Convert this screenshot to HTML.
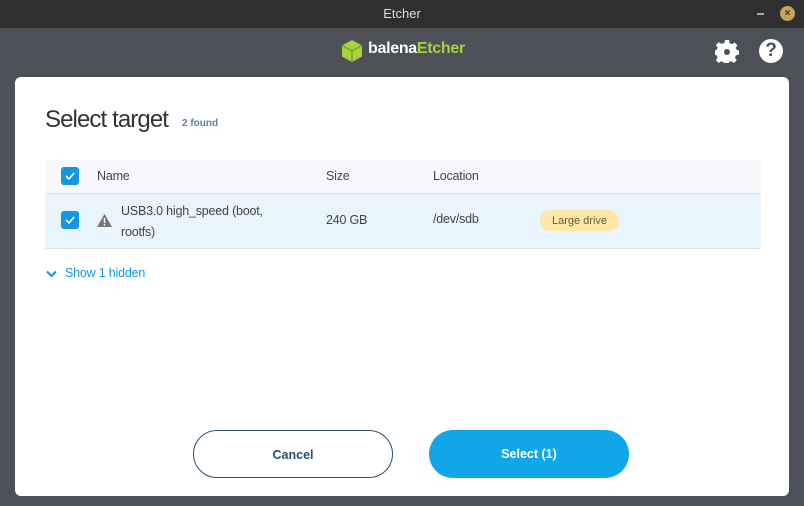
<!DOCTYPE html>
<html><head><style>
*{margin:0;padding:0;box-sizing:border-box}
body{width:804px;height:506px;background:#4d5057;font-family:"Liberation Sans",sans-serif;position:relative;overflow:hidden}
.tb{position:absolute;left:0;top:0;width:804px;height:28px;background:#2f2f2f;color:#ddd;font-size:13px;text-align:center;line-height:28px}
.card{position:absolute;left:15px;top:77px;width:774px;height:419px;background:#fff;border-radius:6px}
.abs{position:absolute}
.cb{position:absolute;width:18px;height:18px;background:#1496e2;border-radius:3px}
.cb svg{position:absolute;left:3px;top:3px}
.btn{position:absolute;top:430px;width:200px;height:48px;border-radius:24px;font-size:12.5px;font-weight:bold;text-align:center;line-height:48px}
.t{font-size:12.5px;color:#444;letter-spacing:-0.2px}
</style></head><body>
<div class="tb">Etcher</div>
<div class="abs" style="left:757px;top:13px;width:7px;height:2px;background:#aaa"></div>
<div class="abs" style="left:780px;top:6px;width:15px;height:15px;border-radius:50%;background:#c9a060;color:#333;font-size:10px;line-height:15px;text-align:center;font-weight:bold">×</div>
<svg class="abs" style="left:341px;top:39px" width="22" height="24" viewBox="0 0 22 24"><path d="M11 1L21 6.5V17.5L11 23L1 17.5V6.5Z" fill="#a5d33b"/><path d="M11 12L21 6.5M11 12L1 6.5M11 12V23" stroke="#6f9a20" stroke-width="1.2" fill="none"/></svg>
<div class="abs" style="left:368px;top:40px;font-size:16px;font-weight:bold;color:#fff;letter-spacing:-0.3px">balena<span style="color:#a5d33b">Etcher</span></div>
<svg class="abs" style="left:715px;top:39px" width="24" height="24" viewBox="0 0 24 24"><path fill="#fff" d="M10 1h4l.6 3 2.4 1.2 2.6-1.7 2.8 2.8-1.7 2.6L21.9 11l2.1.6v4l-3 .6-1 2.4 1.7 2.6-2.8 2.8-2.6-1.7-2.4 1-.6 3h-4l-.6-3-2.4-1-2.6 1.7-2.8-2.8 1.7-2.6-1-2.4-3-.6v-4l3-.6 1-2.4-1.7-2.6 2.8-2.8 2.6 1.7L9.4 4z"/><circle cx="12" cy="13" r="3" fill="#4d5057"/></svg>
<div class="abs" style="left:759px;top:39px;width:24px;height:24px;border-radius:50%;background:#fff;color:#4d5057;font-size:19px;font-weight:bold;text-align:center;line-height:24px">?</div>
<div class="card">
<div class="abs" style="left:30px;top:29px;font-size:24px;color:#333;letter-spacing:-0.9px">Select target</div>
<div class="abs" style="left:167px;top:41px;font-size:10px;color:#5b82a7;font-weight:bold">2 found</div>
<div class="abs" style="left:30px;top:83px;width:716px;height:34px;background:#f8f9fd;border-bottom:1px solid #dde3ea"></div>
<div class="abs" style="left:30px;top:117px;width:716px;height:55px;background:#e8f5fc;border-bottom:1px solid #dde3ea"></div>
<div class="cb" style="left:46px;top:90px"><svg width="12" height="12"><path d="M2 6l3 3 5-6" stroke="#fff" stroke-width="1.6" fill="none"/></svg></div>
<div class="cb" style="left:46px;top:134px"><svg width="12" height="12"><path d="M2 6l3 3 5-6" stroke="#fff" stroke-width="1.6" fill="none"/></svg></div>
<div class="abs t" style="left:82px;top:92px">Name</div>
<div class="abs t" style="left:311px;top:92px">Size</div>
<div class="abs t" style="left:418px;top:92px">Location</div>
<svg class="abs" style="left:81px;top:136px" width="17" height="15"><path d="M8.5 1L16 14H1Z" fill="#777"/><rect x="7.8" y="5" width="1.4" height="5" fill="#fff"/><rect x="7.8" y="11" width="1.4" height="1.4" fill="#fff"/></svg>
<div class="abs t" style="left:106px;top:124px;line-height:21px">USB3.0 high_speed (boot,<br>rootfs)</div>
<div class="abs t" style="left:311px;top:136px">240 GB</div>
<div class="abs t" style="left:418px;top:135px">/dev/sdb</div>
<div class="abs" style="left:525px;top:133px;width:79px;height:21px;border-radius:11px;background:#fde8a6;color:#6b5a2a;font-size:11px;text-align:center;line-height:22px">Large drive</div>
<svg class="abs" style="left:31px;top:193px" width="11" height="8"><path d="M1 1.5l4.5 4.5 4.5-4.5" stroke="#1496e2" stroke-width="2" fill="none"/></svg>
<div class="abs t" style="left:50px;top:189px;color:#1496e2">Show 1 hidden</div>
</div>
<div class="btn" style="left:193px;border:1px solid #2a506f;color:#2a506f;background:#fff">Cancel</div>
<div class="btn" style="left:429px;background:#11a6e8;color:#fff">Select (1)</div>
</body></html>
